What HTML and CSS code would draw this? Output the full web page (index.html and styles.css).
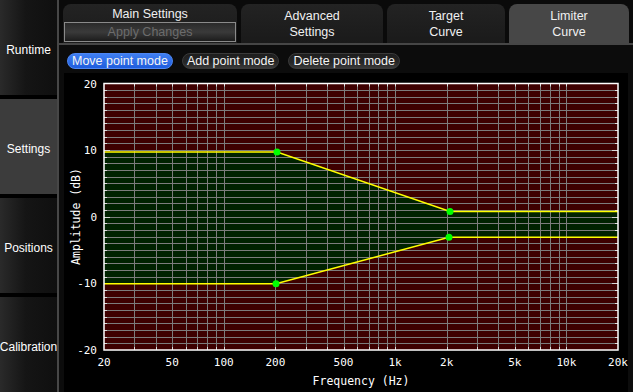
FILE: index.html
```html
<!DOCTYPE html>
<html lang="en">
<head>
  <meta charset="UTF-8">
  <meta name="viewport" content="width=device-width, initial-scale=1.0">
  <title>Limiter Curve</title>
  <link rel="stylesheet" href="styles.css">
</head>
<body>
  <div class="app">
    <nav class="sidebar">
      <div class="side-btn">Runtime</div>
      <div class="side-btn active">Settings</div>
      <div class="side-btn">Positions</div>
      <div class="side-btn">Calibration</div>
    </nav>

    <main class="main">
      <div class="tabbar">
        <div class="tab tab-main">
          <span class="tab-title">Main Settings</span>
          <span class="apply">Apply Changes</span>
        </div>
        <div class="tab tab-adv">Advanced<br>Settings</div>
        <div class="tab tab-target">Target<br>Curve</div>
        <div class="tab tab-limiter active">Limiter<br>Curve</div>
      </div>

      <div class="toolbar">
        <span class="mode active">Move point mode</span>
        <span class="mode">Add point mode</span>
        <span class="mode">Delete point mode</span>
      </div>

      <div class="plot-panel">
        <svg id="plot" width="564" height="319" viewBox="64 73 564 319"></svg>
      </div>
    </main>
  </div>

  <script>
    // plot box in page pixels
    const NS = 'http://www.w3.org/2000/svg';
    const svg = document.getElementById('plot');
    const L = 104, R = 618, T = 83.5, B = 350;

    function fx(f){ return L + (R - L) * Math.log10(f / 20) / 3; }
    function fy(db){ return T + (B - T) * (20 - db) / 40; }

    function add(tag, attrs, text){
      const el = document.createElementNS(NS, tag);
      for (const k in attrs) el.setAttribute(k, attrs[k]);
      if (text) el.textContent = text;
      svg.appendChild(el);
      return el;
    }

    // limiter points (upper / lower)
    const upper = [[L, 152], [277, 152], [450, 211.5], [R, 211.5]];
    const lower = [[L, 283.7], [276, 283.7], [449, 237.3], [R, 237.3]];
    const pts = a => a.map(p => p.join(',')).join(' ');

    // background zones
    add('rect', {x: L, y: T, width: R - L, height: B - T, fill: '#3e0000'});
    add('polygon', {points: pts(upper.concat(lower.slice().reverse())), fill: '#002200'});

    // grid
    const freqs = [];
    for (let d = 10; d <= 10000; d *= 10){
      for (let m = 1; m <= 9; m++){
        const f = d * m;
        if (f > 20 && f < 20000) freqs.push(f);
      }
    }
    freqs.forEach(f => {
      const x = Math.round(fx(f)) + 0.5;
      add('line', {x1: x, y1: T, x2: x, y2: B, class: 'grid'});
    });
    for (let db = -19; db <= 19; db++){
      const y = Math.round(fy(db)) + 0.5;
      add('line', {x1: L, y1: y, x2: R, y2: y, class: 'grid'});
    }

    // ticks
    for (let db = -19; db <= 19; db++){
      const y = Math.round(fy(db)) + 0.5;
      const len = db % 10 === 0 ? 6 : 3;
      add('line', {x1: L, y1: y, x2: L + len, y2: y, class: 'tick'});
      add('line', {x1: R - len, y1: y, x2: R, y2: y, class: 'tick'});
    }
    freqs.forEach(f => {
      const x = Math.round(fx(f)) + 0.5;
      add('line', {x1: x, y1: B - 3, x2: x, y2: B, class: 'tick'});
      add('line', {x1: x, y1: T, x2: x, y2: T + 3, class: 'tick'});
    });

    // curves and points
    add('polyline', {points: pts(upper), class: 'curve'});
    add('polyline', {points: pts(lower), class: 'curve'});
    [upper[1], upper[2], lower[1], lower[2]].forEach(p => {
      add('circle', {cx: p[0], cy: p[1], r: 3.5, fill: '#00ff00'});
    });

    // frame
    add('rect', {x: L, y: T, width: R - L, height: B - T, class: 'frame'});

    // labels
    [20, 10, 0, -10, -20].forEach(v => {
      add('text', {x: 97, y: fy(v) + 4, 'text-anchor': 'end', class: 'lbl'}, String(v));
    });
    [['20', 20], ['50', 50], ['100', 100], ['200', 200], ['500', 500], ['1k', 1000],
     ['2k', 2000], ['5k', 5000], ['10k', 10000], ['20k', 20000]].forEach(l => {
      add('text', {x: fx(l[1]), y: 366, 'text-anchor': 'middle', class: 'lbl'}, l[0]);
    });
    add('text', {x: 361, y: 385, 'text-anchor': 'middle', class: 'title'}, 'Frequency (Hz)');
    add('text', {x: 0, y: 0, 'text-anchor': 'middle', class: 'title',
      transform: 'translate(80 216.5) rotate(-90)'}, 'Amplitude (dB)');
  </script>
</body>
</html>
```

FILE: styles.css
```css
*{margin: 0px; padding: 0px; box-sizing: border-box;}
body{
  width: 633px; height: 392px;
  overflow: hidden;
  background: #0c0c0c;
  font-family: "Liberation Sans", Arial, sans-serif;
  color: #fff;
}
.app{
  display: flex;
  height: 392px;
}

/* left menu */
.sidebar{
  width: 59px;
  border-right: 2px solid #474747;
  background: #000;
  display: flex;
  flex-direction: column;
  gap: 4px;
  overflow: hidden;
}
.side-btn{
  flex: 1;
  display: flex;
  align-items: center;
  justify-content: center;
  padding-top: 4px;
  font-size: 12px;
  white-space: nowrap;
  background: linear-gradient(to right, #2a2a2a, #151515 45%, #0f0f0f);
}
.side-btn.active{background: #3c3c3c;}

/* right side */
.main{
  flex: 1;
  display: flex;
  flex-direction: column;
  min-width: 0;
}
.tabbar{
  height: 45px;
  padding: 4px 0 0 4px;
  display: flex;
  gap: 4px;
  background: #0a0a0a;
  border-bottom: 2px solid #464646;
}
.tab{
  display: flex;
  flex-direction: column;
  align-items: center;
  justify-content: center;
  border-radius: 8px 8px 0 0;
  background: linear-gradient(#232323, #1a1a1a);
  font-size: 12.5px;
  line-height: 16px;
  color: #f0f0f0;
  text-align: center;
}
.tab-main{width: 174px; justify-content: flex-start; padding-top: 2px;}
.tab-adv{width: 142px;}
.tab-target{width: 118px;}
.tab-limiter{width: 120px;}
.tab.active{background: #474747;}
.apply{
  align-self: stretch;
  margin: 0 1px;
  height: 20px;
  line-height: 18px;
  border: 1px solid #8a8a8a;
  background: linear-gradient(#2a2a2a, #3a3a3a 50%, #1c1c1c);
  color: #6c6c6c;
}

/* mode buttons */
.toolbar{
  display: flex;
  gap: 9px;
  padding: 8px 0 0 8px;
  height: 28px;
}
.mode{
  height: 16px;
  padding: 0 4px;
  border-radius: 8px;
  font-size: 12.5px;
  line-height: 14px;
  color: #f4f4f4;
  border: 1px solid #3a3a3a;
  background: linear-gradient(#1e1e1e, #262626 60%, #3a3a3a);
}
.mode.active{
  border-color: #4d86f2;
  background: linear-gradient(#3f7ff2, #1f5ddd);
}

/* plot */
.plot-panel{
  margin: 0 5px;
  flex: 1;
  background: #000;
}
#plot{display: block;}
#plot .grid{stroke: #7c7c7c; stroke-width: 1;}
#plot .tick{stroke: #d8d8d8; stroke-width: 1;}
#plot .curve{fill: none; stroke: #ffff00; stroke-width: 1.5;}
#plot .frame{fill: none; stroke: #fff; stroke-width: 1.5;}
#plot .lbl{fill: #fff; font-family: "DejaVu Sans Mono", monospace; font-size: 11px;}
#plot .title{fill: #fff; font-family: "DejaVu Sans Mono", monospace; font-size: 11.5px;}
```
